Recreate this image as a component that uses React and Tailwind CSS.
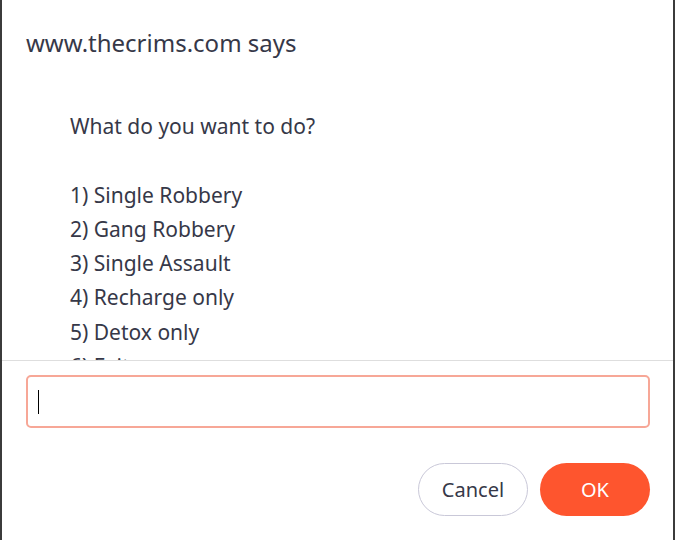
import React from 'react';

const options = [
  '1) Single Robbery',
  '2) Gang Robbery',
  '3) Single Assault',
  '4) Recharge only',
  '5) Detox only',
  '6) Exit',
];

const App = () => {
  return (
    <div className="w-[675px] h-[540px] bg-[#3b3b3b] flex px-[2px] overflow-hidden font-['Noto_Sans',sans-serif] text-[#363848]">
      <div className="flex-1 bg-white flex flex-col">
        {/* Message area */}
        <div className="h-[361px] border-b border-[#dedede] overflow-hidden pl-[24px] pt-[27px]">
          <h1 className="text-[24px] leading-[32px]">www.thecrims.com says</h1>
          <div className="pl-[44px] mt-[50px] text-[21px] leading-[34.3px]">
            <div>What do you want to do?</div>
            <div>&nbsp;</div>
            {options.map((o) => (
              <div key={o}>{o}</div>
            ))}
          </div>
        </div>

        {/* Prompt input */}
        <div className="px-[24px] pr-[23px] pt-[14px]">
          <div className="h-[53px] border-2 border-[#f7a797] rounded-[5px] flex items-center pl-[10px]">
            <div className="w-px h-[24px] bg-black" />
          </div>
        </div>

        {/* Buttons */}
        <div className="flex justify-end gap-[12px] pr-[23px] mt-[35px]">
          <button className="w-[110px] h-[53px] rounded-full border border-[#c9c8d8] bg-white text-[20px] text-[#363848]">
            Cancel
          </button>
          <button className="w-[110px] h-[53px] rounded-full bg-[#fe552e] text-[20px] text-white">
            OK
          </button>
        </div>
      </div>
    </div>
  );
};

export default App;
